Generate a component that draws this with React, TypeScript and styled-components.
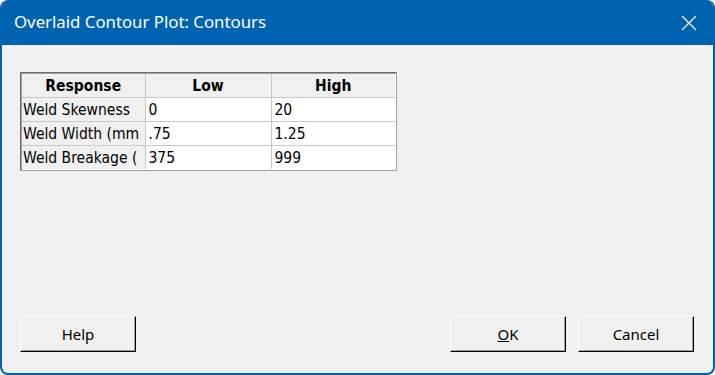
import React from 'react';
import styled, { createGlobalStyle } from 'styled-components';

const GlobalStyle = createGlobalStyle`
  html, body {
    margin: 0;
    padding: 0;
    background: #ffffff;
  }
  #root {
    width: 715px;
    height: 375px;
  }
`;

interface RowData {
  name: string;
  low: string;
  high: string;
}

const rows: RowData[] = [
  { name: 'Weld Skewness', low: '0', high: '20' },
  { name: 'Weld Width (mm', low: '.75', high: '1.25' },
  { name: 'Weld Breakage (', low: '375', high: '999' },
];

const CloseIcon = () => (
  <svg width="16" height="16" viewBox="0 0 16 16">
    <path d="M1 1 L15 15 M15 1 L1 15" stroke="#ffffff" strokeWidth="1.2" fill="none" />
  </svg>
);

const App = () => {
  return (
    <>
      <GlobalStyle />
      <Window>
        <TitleBar>
          <Title>Overlaid Contour Plot: Contours</Title>
          <CloseButton>
            <CloseIcon />
          </CloseButton>
        </TitleBar>
        <Body>
          <GridFrame>
            <Grid>
              <colgroup>
                <col style={{ width: 123 }} />
                <col style={{ width: 126 }} />
                <col style={{ width: 124 }} />
              </colgroup>
              <thead>
                <tr>
                  <HeadCell>Response</HeadCell>
                  <HeadCell>Low</HeadCell>
                  <HeadCell>High</HeadCell>
                </tr>
              </thead>
              <tbody>
                {rows.map((r) => (
                  <tr key={r.name}>
                    <NameCell>{r.name}</NameCell>
                    <DataCell>{r.low}</DataCell>
                    <DataCell>{r.high}</DataCell>
                  </tr>
                ))}
              </tbody>
            </Grid>
          </GridFrame>
        </Body>
        <Footer>
          <Button>Help</Button>
          <ButtonGroup>
            <Button>
              <u>O</u>K
            </Button>
            <Button>Cancel</Button>
          </ButtonGroup>
        </Footer>
      </Window>
    </>
  );
};

export default App;

const Window = styled.div`
  box-sizing: border-box;
  width: 715px;
  height: 375px;
  display: flex;
  flex-direction: column;
  background: #f0f0f0;
  border: 2px solid #0063b1;
  border-top: none;
  border-radius: 8px;
  overflow: hidden;
`;

const TitleBar = styled.div`
  height: 45px;
  flex: none;
  background: #0063b1;
  display: flex;
  align-items: center;
  justify-content: space-between;
  padding: 0 16px 0 12px;
`;

const Title = styled.div`
  color: #ffffff;
  font-family: 'Noto Sans', sans-serif;
  font-size: 16.8px;
  padding-bottom: 2px;
`;

const CloseButton = styled.div`
  display: flex;
  align-items: center;
  justify-content: center;
  width: 16px;
  height: 16px;
`;

const Body = styled.div`
  flex: 1;
  padding: 27px 18px 0;
`;

const GridFrame = styled.div`
  display: inline-block;
  border-top: 1px solid #6d6d6d;
  border-left: 1px solid #6d6d6d;
  border-right: 1px solid #a0a0a0;
  border-bottom: 1px solid #a0a0a0;
  background: #ffffff;
  box-shadow: inset 1px 1px 0 #a0a0a0, inset -1px -1px 0 #ffffff;
  padding: 1px;
`;

const Grid = styled.table`
  border-collapse: collapse;
  table-layout: fixed;
  width: 373px;
  font-family: 'DejaVu Sans Condensed', 'DejaVu Sans', sans-serif;
  font-size: 15.5px;
  color: #000000;
`;

const HeadCell = styled.th`
  height: 23px;
  padding: 0;
  background: #f0f0f0;
  border: 1px solid #c8c8c8;
  border-top: none;
  font-weight: bold;
  text-align: center;
  &:first-child {
    border-left: none;
  }
  &:last-child {
    border-right: none;
  }
`;

const DataCell = styled.td`
  height: 23px;
  padding: 0 0 0 3px;
  border: 1px solid #c8c8c8;
  white-space: nowrap;
  overflow: hidden;
  &:last-child {
    border-right: none;
  }
  tr:last-child > & {
    border-bottom: none;
  }
`;

const NameCell = styled(DataCell)`
  background: #f0f0f0;
  padding-left: 1px;
  border-left: none;
`;

const Footer = styled.div`
  display: flex;
  justify-content: space-between;
  align-items: center;
  padding: 0 19px 21px 18px;
`;

const ButtonGroup = styled.div`
  display: flex;
  gap: 12px;
`;

const Button = styled.div`
  box-sizing: border-box;
  width: 116px;
  height: 36px;
  display: flex;
  align-items: center;
  justify-content: center;
  background: #f0f0f0;
  border-top: 1px solid #ffffff;
  border-left: 1px solid #ffffff;
  border-right: 1px solid #000000;
  border-bottom: 1px solid #000000;
  box-shadow: inset -1px -1px 0 #a0a0a0;
  font-family: 'Noto Sans', sans-serif;
  font-size: 15px;
  color: #000000;
`;
